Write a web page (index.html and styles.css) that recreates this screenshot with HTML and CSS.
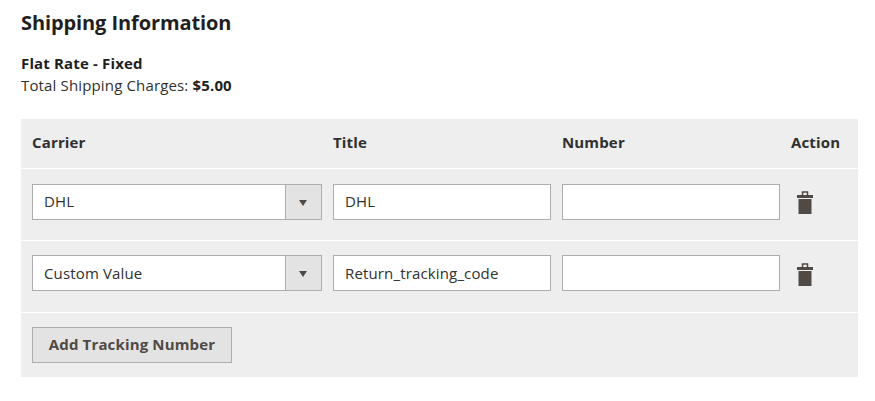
FILE: index.html
```html
<!DOCTYPE html>
<html lang="en">
<head>
    <meta charset="UTF-8">
    <meta name="viewport" content="width=device-width, initial-scale=1.0">
    <title>Shipping Information</title>
    <link rel="stylesheet" href="styles.css">
</head>
<body>
    <h2 class="section-title">Shipping Information</h2>

    <div class="method">
        <strong>Flat Rate - Fixed</strong><br>
        Total Shipping Charges: <strong>$5.00</strong>
    </div>

    <table class="tracking">
        <colgroup>
            <col class="col-carrier">
            <col class="col-text">
            <col class="col-text">
            <col>
        </colgroup>
        <thead>
            <tr>
                <th>Carrier</th>
                <th>Title</th>
                <th>Number</th>
                <th>Action</th>
            </tr>
        </thead>
        <tbody>
            <tr>
                <td>
                    <div class="select">
                        <span class="select-value">DHL</span>
                        <span class="select-arrow"></span>
                    </div>
                </td>
                <td><input class="field" type="text" value="DHL"></td>
                <td><input class="field" type="text"></td>
                <td>
                    <svg class="trash" width="16" height="23" viewBox="0 0 16 23">
                        <path d="M5.500 4.500V1h5v3.500" fill="none" stroke="#514943" stroke-width="1.500"/>
                        <rect x="0" y="4" width="16" height="3" fill="#514943"/>
                        <path d="M1.500 8h13v15h-13z" fill="#514943"/>
                    </svg>
                </td>
            </tr>
            <tr>
                <td>
                    <div class="select">
                        <span class="select-value">Custom Value</span>
                        <span class="select-arrow"></span>
                    </div>
                </td>
                <td><input class="field" type="text" value="Return_tracking_code"></td>
                <td><input class="field" type="text"></td>
                <td>
                    <svg class="trash" width="16" height="23" viewBox="0 0 16 23">
                        <path d="M5.500 4.500V1h5v3.500" fill="none" stroke="#514943" stroke-width="1.500"/>
                        <rect x="0" y="4" width="16" height="3" fill="#514943"/>
                        <path d="M1.500 8h13v15h-13z" fill="#514943"/>
                    </svg>
                </td>
            </tr>
        </tbody>
        <tfoot>
            <tr>
                <td colspan="4"><button class="add-button" type="button">Add Tracking Number</button></td>
            </tr>
        </tfoot>
    </table>
</body>
</html>
```

FILE: styles.css
```css
* {
    box-sizing: border-box;
}

body {
    margin: 0;
    padding: 0 17px 0 21px;
    font-family: "Open Sans", sans-serif;
    font-size: 15px;
    letter-spacing: 0.15px;
    line-height: 22px;
    color: #303030;
    background: #fff;
}

.section-title {
    margin: 0;
    padding-top: 9px;
    font-size: 20px;
    letter-spacing: -0.1px;
    line-height: 28px;
    font-weight: 700;
    color: #1f1f1f;
}

.method {
    margin-top: 15px;
}

.method strong {
    font-weight: 700;
    color: #1f1f1f;
}

/* Tracking table */
.tracking {
    width: 837px;
    margin-top: 23px;
    table-layout: fixed;
    border-collapse: collapse;
    background: #eee;
}

.col-carrier {
    width: 301px;
}

.col-text {
    width: 229px;
}

.tracking th {
    height: 49px;
    padding: 0 0 2px 11px;
    border-bottom: 1px solid #fff;
    text-align: left;
    font-weight: 700;
    color: #303030;
}

.tracking tbody td {
    padding: 15px 0 20px 11px;
    border-bottom: 1px solid #fff;
    vertical-align: top;
}

.tracking tbody tr + tr td {
    padding-top: 14px;
    padding-bottom: 21px;
}

.tracking tfoot td {
    padding: 14px 0 14px 11px;
}

.select {
    display: flex;
    height: 36px;
    border: 1px solid #adadad;
    background: #fff;
}

.select-value {
    flex: 1;
    padding: 0 11px;
    line-height: 33px;
}

.select-arrow {
    position: relative;
    width: 36px;
    border-left: 1px solid #adadad;
    background: #e3e3e3;
}

.select-arrow::after {
    content: "";
    position: absolute;
    top: 15px;
    left: 13px;
    border-style: solid;
    border-width: 6px 4.500px 0;
    border-color: #514943 transparent transparent;
}

.field {
    display: block;
    width: 218px;
    height: 36px;
    padding: 0 11px 2px;
    border: 1px solid #adadad;
    border-radius: 0;
    outline: none;
    font: inherit;
    letter-spacing: inherit;
    color: #303030;
    background: #fff;
}

/* second row text sits a pixel lower */
.tracking tbody tr + tr .select-value {
    line-height: 35px;
}

.tracking tbody tr + tr .field {
    padding-bottom: 0;
}

.trash {
    display: block;
    margin: 7px 0 0 6px;
}

.tracking tbody tr + tr .trash {
    margin-top: 8px;
}

.add-button {
    display: block;
    width: 200px;
    height: 36px;
    padding: 0 0 2px;
    border: 1px solid #adadad;
    border-radius: 0;
    font: inherit;
    letter-spacing: inherit;
    font-weight: 700;
    color: #514943;
    background: #e3e3e3;
}
```
